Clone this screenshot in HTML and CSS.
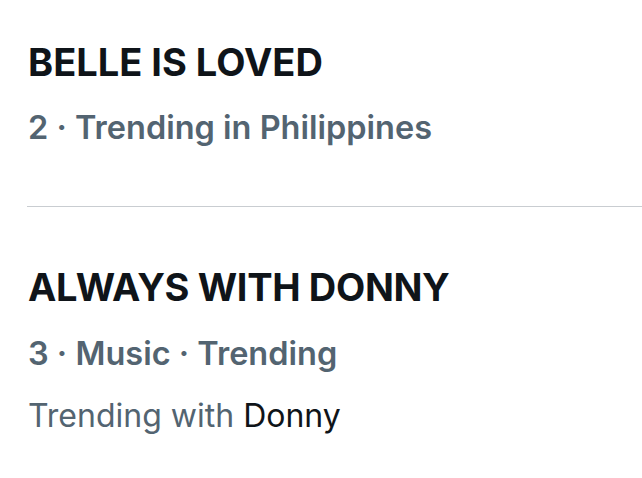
FILE: index.html
```html
<!DOCTYPE html>
<html>
<head>
<meta charset="utf-8">
<link rel="stylesheet" href="styles.css">
</head>
<body>
<div class="list">
  <div class="trend first">
    <div class="title">BELLE IS LOVED</div>
    <div class="meta">2 · Trending in Philippines</div>
  </div>
  <div class="divider"></div>
  <div class="trend second">
    <div class="title">ALWAYS WITH DONNY</div>
    <div class="meta">3 · Music · Trending</div>
    <div class="with">Trending with <span class="name">Donny</span></div>
  </div>
</div>
</body>
</html>
```
FILE: styles.css
```css
html, body {
  margin: 0;
  padding: 0;
  background: #ffffff;
}
body {
  font-family: Inter, "Noto Sans", "Liberation Sans", sans-serif;
  width: 642px;
  height: 478px;
  overflow: hidden;
}
.list {
  display: flex;
  flex-direction: column;
}
.trend {
  padding-left: 28px;
  display: flex;
  flex-direction: column;
}
.first {
  padding-top: 40px;
}
.second {
  padding-top: 58px;
}
.title {
  font-size: 38px;
  font-weight: 700;
  color: #0f1419;
  line-height: 44px;
  letter-spacing: 0;
}
.second .title {
  letter-spacing: -0.35px;
}
.meta {
  font-size: 32.5px;
  font-weight: 600;
  color: #536471;
  line-height: 40px;
  margin-top: 24px;
}
.second .meta {
  margin-top: 25px;
}
.with {
  font-size: 32px;
  font-weight: 400;
  color: #536471;
  line-height: 40px;
  margin-top: 22px;
}
.name {
  color: #0f1419;
}
.divider {
  margin-left: 27px;
  margin-top: 58px;
  height: 1px;
  background: #c9cdd1;
}
```
